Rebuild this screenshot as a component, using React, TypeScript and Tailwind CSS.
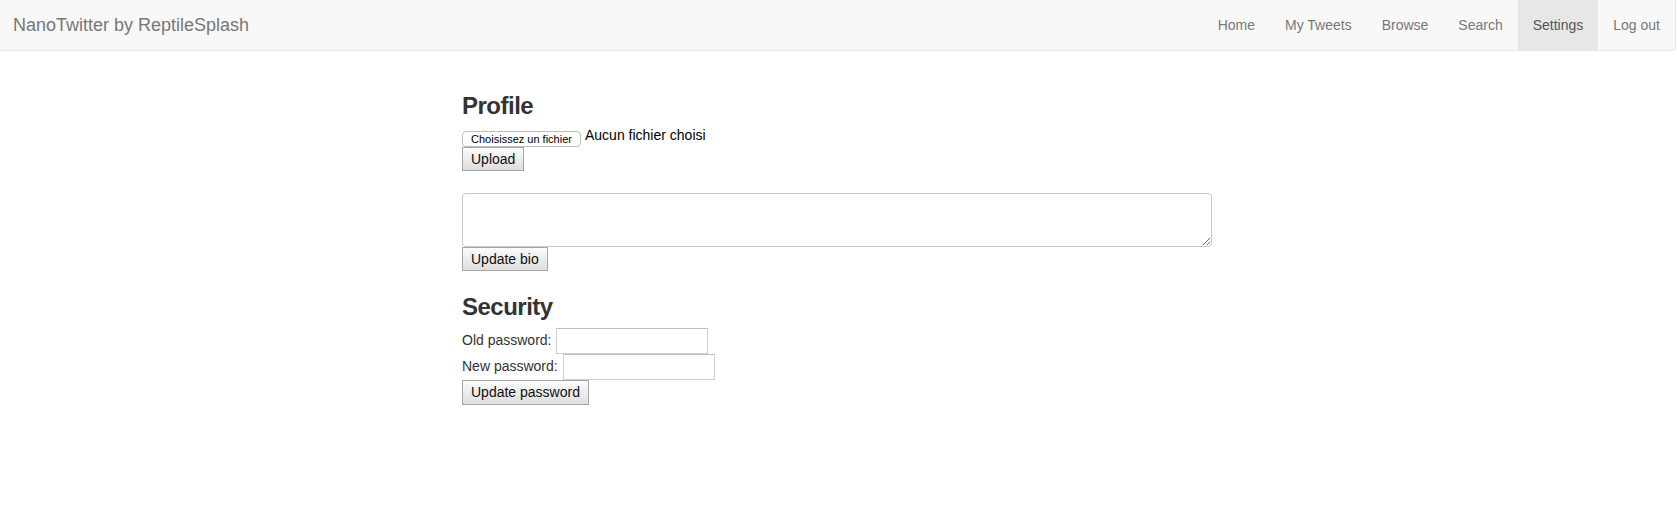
import React from "react";

const btn =
  "h-[24px] px-[8px] border border-[#a6a6a6] bg-gradient-to-b from-[#fcfcfc] to-[#dedede] text-[14px] leading-[20px] text-[#111] rounded-none";

export default function App() {
  const nav = ["Home", "My Tweets", "Browse", "Search", "Settings", "Log out"];
  return (
    <div className="min-h-[513px] bg-white text-[#333] text-[14px]" style={{ fontFamily: '"Liberation Sans", Arial, sans-serif' }}>
      <div className="w-[1676px] h-[51px] bg-[#f8f8f8] border-b border-r border-[#e7e7e7] rounded-br-[4px] flex items-stretch justify-between">
        <div className="pl-[13px] flex items-center text-[18px] text-[#777]">NanoTwitter by ReptileSplash</div>
        <div className="flex items-stretch">
          {nav.map((n) => (
            <div
              key={n}
              className={
                n === "Settings"
                  ? "px-[15px] flex items-center bg-[#e7e7e7] text-[#555]"
                  : "px-[15px] flex items-center text-[#777]"
              }
            >
              {n}
            </div>
          ))}
        </div>
      </div>

      <div className="ml-[462px] w-[750px] pt-[40px]">
        <h3 className="pt-[2px] text-[24px] leading-[26.4px] font-bold tracking-[-0.5px] text-[#333] mb-[8px]">Profile</h3>
        <div className="flex items-end h-[20px]">
          <button className="h-[16px] w-[119px] border border-[#bdbdbd] rounded-[4px] bg-white text-[11px] leading-[14px] text-black flex items-center justify-center">
            Choisissez un fichier
          </button>
          <span className="ml-[4px] self-start leading-[17px] text-black">Aucun fichier choisi</span>
        </div>
        <button className={btn}>Upload</button>
        <div className="h-[22px]" />
        <textarea className="block w-[750px] h-[54px] border border-[#c9c9c9] rounded-[4px] bg-white outline-none" />
        <button className={btn}>Update bio</button>

        <h3 className="mt-[20px] pt-[3px] text-[24px] leading-[26.4px] font-bold tracking-[-0.5px] text-[#333] mb-[7px]">Security</h3>
        <div className="flex items-center h-[26px]">
          <span>Old password:</span>
          <input type="password" className="ml-[5px] w-[152px] h-[26px] border border-[#cfcfcf] border-t-[#bdbdbd] bg-white outline-none" />
        </div>
        <div className="flex items-center h-[26px]">
          <span>New password:</span>
          <input type="password" className="ml-[5px] w-[152px] h-[26px] border border-[#cfcfcf] border-t-[#bdbdbd] bg-white outline-none" />
        </div>
        <button className={btn + " h-[25px]"}>Update password</button>
      </div>
    </div>
  );
}
